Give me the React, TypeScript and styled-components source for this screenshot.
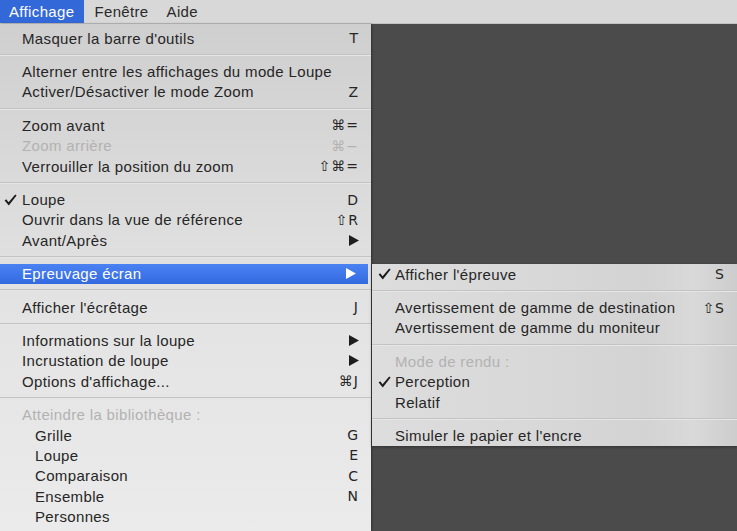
import styled, { createGlobalStyle } from 'styled-components';

const GlobalStyle = createGlobalStyle`
  html, body {
    margin: 0;
    padding: 0;
    background: #4b4b4b;
    overflow: hidden;
  }
  body {
    font-family: "Liberation Sans", "DejaVu Sans", Arial, sans-serif;
    font-size: 15px;
    letter-spacing: 0.35px;
    color: #222;
  }
`;

const Screen = styled.div`
  width: 737px;
  height: 531px;
  display: flex;
  flex-direction: column;
`;

const MenuBar = styled.nav`
  height: 23px;
  flex: none;
  display: flex;
  background: #d8d8d8;
  border-bottom: 1px solid #c2c2c2;
`;

const MenuTitle = styled.div<{ $active?: boolean }>`
  display: flex;
  align-items: center;
  padding: 0 ${({ $active }) => ($active ? 10 : 9)}px 0 9px;
  margin-right: ${({ $active }) => ($active ? 1 : 0)}px;
  color: ${({ $active }) => ($active ? '#fff' : '#2a2a2a')};
  background: ${({ $active }) => ($active ? '#3368d8' : 'transparent')};
`;

const Workspace = styled.div`
  flex: 1;
  display: flex;
  align-items: flex-start;
`;

const MainMenu = styled.div`
  width: 371px;
  height: 100%;
  box-sizing: border-box;
  padding-top: 4px;
  background: linear-gradient(180deg, #cfcfcf 0%, #d8d8d8 25%, #e3e3e3 55%, #ebebeb 100%);
  box-shadow: 1px 0 2px rgba(0, 0, 0, 0.35);
`;

const SubMenu = styled.div<{ $top: number }>`
  margin-top: ${({ $top }) => $top}px;
  margin-left: 1px;
  flex: 1;
  background: linear-gradient(90deg, #dddddd 0%, #d8d8d8 45%, #d3d3d3 75%, #d9d9d9 88%, #cdcdcd 100%);
  box-shadow: 0 1px 3px rgba(0, 0, 0, 0.35);
`;

const Row = styled.div<{ $disabled?: boolean; $highlight?: boolean; $right: number }>`
  height: 20.4px;
  display: flex;
  align-items: center;
  padding-right: ${({ $right }) => $right}px;
  margin-right: ${({ $highlight }) => ($highlight ? 3 : 0)}px;
  color: ${({ $disabled, $highlight }) => ($highlight ? '#fff' : $disabled ? '#b2b2b2' : '#262626')};
  background: ${({ $highlight }) => ($highlight ? 'linear-gradient(180deg, #4b82f2 0%, #336ae0 100%)' : 'transparent')};
  white-space: nowrap;
`;

const Check = styled.span<{ $width: number; $offset: number }>`
  width: ${({ $width }) => $width}px;
  flex: none;
  display: flex;
  align-items: center;
  padding-left: ${({ $offset }) => $offset}px;
  box-sizing: border-box;
`;

const Label = styled.span<{ $indent?: number }>`
  flex: 1;
  padding-left: ${({ $indent }) => $indent ?? 0}px;
`;

const Shortcut = styled.span`
  font-family: "DejaVu Sans", "Liberation Sans", sans-serif;
  font-size: 14px;
  letter-spacing: 1px;
  display: flex;
  align-items: center;
`;

const Separator = styled.div`
  height: 13px;
  display: flex;
  align-items: center;
  &::after {
    content: '';
    flex: 1;
    height: 1px;
    background: #c3c3c3;
    border-bottom: 1px solid #e6e6e6;
  }
`;

const Arrow = ({ color }: { color: string }) => (
  <svg width="10" height="11" viewBox="0 0 10 11">
    <polygon points="0,0 10,5.5 0,11" fill={color} />
  </svg>
);

const Tick = () => (
  <svg width="13" height="12" viewBox="0 0 13 12">
    <path d="M0.6 6.6 L2.2 5.2 L4.6 8.2 L11.2 0.4 L12.6 1.4 L4.8 11.4 Z" fill="#1c1c1c" />
  </svg>
);

type Item =
  | { sep: true }
  | {
      sep?: false;
      label: string;
      key?: string;
      check?: boolean;
      disabled?: boolean;
      arrow?: boolean;
      highlight?: boolean;
      indent?: number;
    };

const mainItems: Item[] = [
  { label: "Masquer la barre d'outils", key: 'T' },
  { sep: true },
  { label: 'Alterner entre les affichages du mode Loupe' },
  { label: 'Activer/Désactiver le mode Zoom', key: 'Z' },
  { sep: true },
  { label: 'Zoom avant', key: '⌘=' },
  { label: 'Zoom arrière', key: '⌘−', disabled: true },
  { label: 'Verrouiller la position du zoom', key: '⇧⌘=' },
  { sep: true },
  { label: 'Loupe', key: 'D', check: true },
  { label: 'Ouvrir dans la vue de référence', key: '⇧R' },
  { label: 'Avant/Après', arrow: true },
  { sep: true },
  { label: 'Epreuvage écran', arrow: true, highlight: true },
  { sep: true },
  { label: "Afficher l'écrêtage", key: 'J' },
  { sep: true },
  { label: 'Informations sur la loupe', arrow: true },
  { label: 'Incrustation de loupe', arrow: true },
  { label: "Options d'affichage...", key: '⌘J' },
  { sep: true },
  { label: 'Atteindre la bibliothèque :', disabled: true },
  { label: 'Grille', key: 'G', indent: 13 },
  { label: 'Loupe', key: 'E', indent: 13 },
  { label: 'Comparaison', key: 'C', indent: 13 },
  { label: 'Ensemble', key: 'N', indent: 13 },
  { label: 'Personnes', indent: 13 },
];

const subItems: Item[] = [
  { label: "Afficher l'épreuve", key: 'S', check: true },
  { sep: true },
  { label: 'Avertissement de gamme de destination', key: '⇧S' },
  { label: 'Avertissement de gamme du moniteur' },
  { sep: true },
  { label: 'Mode de rendu :', disabled: true },
  { label: 'Perception', check: true },
  { label: 'Relatif' },
  { sep: true },
  { label: "Simuler le papier et l'encre" },
];

function MenuList({ items, checkWidth, checkOffset, right }: { items: Item[]; checkWidth: number; checkOffset: number; right: number }) {
  return (
    <>
      {items.map((item, i) =>
        item.sep ? (
          <Separator key={i} />
        ) : (
          <Row key={i} $disabled={item.disabled} $highlight={item.highlight} $right={right}>
            <Check $width={checkWidth} $offset={checkOffset}>{item.check && <Tick />}</Check>
            <Label $indent={item.indent}>{item.label}</Label>
            {item.key && <Shortcut>{item.key}</Shortcut>}
            {item.arrow && <Arrow color={item.highlight ? '#fff' : '#1e1e1e'} />}
          </Row>
        )
      )}
    </>
  );
}

export default function App() {
  return (
    <Screen>
      <GlobalStyle />
      <MenuBar>
        <MenuTitle $active>Affichage</MenuTitle>
        <MenuTitle>Fenêtre</MenuTitle>
        <MenuTitle>Aide</MenuTitle>
      </MenuBar>
      <Workspace>
        <MainMenu>
          <MenuList items={mainItems} checkWidth={22} checkOffset={4} right={12} />
        </MainMenu>
        <SubMenu $top={240}>
          <MenuList items={subItems} checkWidth={23} checkOffset={6} right={12} />
        </SubMenu>
      </Workspace>
    </Screen>
  );
}
